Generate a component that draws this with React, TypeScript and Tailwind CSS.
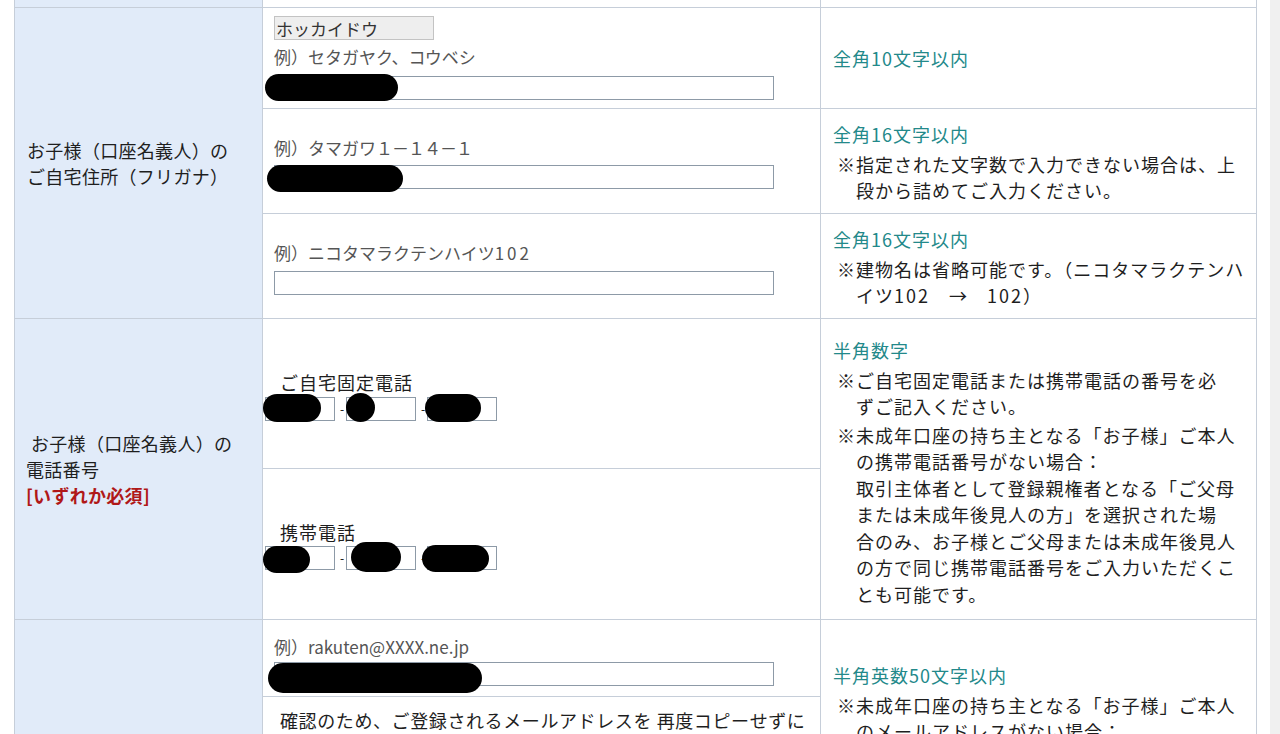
import React from "react";

const Blob = ({ l, t, w, h }: { l: number; t: number; w: number; h: number }) => (
  <div
    className="absolute rounded-full bg-black"
    style={{ left: l, top: t, width: w, height: h }}
  />
);

const Input = () => (
  <div className="h-[24px] w-[500px] border border-[#8d9aa7] bg-white" />
);

const PhoneBoxes = () => (
  <div className="flex items-center">
    <div className="h-[24px] w-[70px] border border-[#8d9aa7] bg-white" />
    <span className="w-[11px] pl-[5px] text-[12px] leading-none text-black">-</span>
    <div className="h-[24px] w-[70px] border border-[#8d9aa7] bg-white" />
    <span className="w-[11px] pl-[5px] text-[12px] leading-none text-black">-</span>
    <div className="h-[24px] w-[70px] border border-[#8d9aa7] bg-white" />
  </div>
);

const Teal = ({ children }: { children: React.ReactNode }) => (
  <div className="mb-[3px] text-[#23898a]">{children}</div>
);

const Cont = ({ children }: { children: React.ReactNode }) => (
  <div className="whitespace-nowrap pl-[19px]">{children}</div>
);

export default function App() {
  const blue = "bg-[#e1ebf9]";
  const right =
    "col-start-3 flex flex-col bg-white pl-[12px] text-[18px] leading-[26.5px] tracking-[1px] text-[#1e1e1e]";
  const ex = "text-[17px] leading-[24px] text-[#555555] whitespace-nowrap";
  return (
    <div className="flex h-[734px] w-[1280px] overflow-hidden bg-white font-['Noto_Sans_CJK_JP',sans-serif]">
      <div className="w-[14px] shrink-0" />
      <div className="grid w-[1243px] shrink-0 grid-cols-[247px_557px_435px] grid-rows-[7px_100px_104px_104px_149px_150px_76px_150px] gap-px self-start bg-[#c6ced9] px-px pb-px">
        {/* top partial row */}
        <div className={`col-start-1 row-start-1 ${blue}`} />
        <div className="col-start-2 row-start-1 bg-white" />
        <div className="col-start-3 row-start-1 bg-white" />

        {/* address label */}
        <div
          className={`col-start-1 row-start-2 row-span-3 flex flex-col justify-center pl-[12px] text-[18px] leading-[26px] tracking-[0.3px] text-[#1e1e1e] ${blue}`}
        >
          <div>お子様（口座名義人）の</div>
          <div>ご自宅住所（フリガナ）</div>
        </div>

        {/* address row 1 */}
        <div className="relative col-start-2 row-start-2 flex flex-col bg-white pl-[11px] pt-[8px]">
          <div className="flex h-[24px] w-[160px] items-center border border-[#c3c3c3] bg-[#eeeeee] pl-[1px] text-[17px] leading-none text-[#333]">
            ホッカイドウ
          </div>
          <div className={`mt-[5px] ${ex}`}>例）セタガヤク、コウベシ</div>
          <div className="mt-[7px]">
            <Input />
          </div>
          <Blob l={2} t={66} w={133} h={27} />
        </div>
        <div className={`row-start-2 justify-center ${right}`}>
          <div className="text-[#23898a]">全角10文字以内</div>
        </div>

        {/* address row 2 */}
        <div className="relative col-start-2 row-start-3 flex flex-col bg-white pl-[11px] pt-[27px]">
          <div className={ex}>
            例）タマガワ<span className="tracking-[-1px]">１－１４－１</span>
          </div>
          <div className="mt-[5px]">
            <Input />
          </div>
          <Blob l={4} t={56} w={136} h={27} />
        </div>
        <div className={`row-start-3 pt-[12px] ${right}`}>
          <Teal>全角16文字以内</Teal>
          <div className="pl-[4px]">
            <div className="whitespace-nowrap">※指定された文字数で入力できない場合は、上</div>
            <Cont>段から詰めてご入力ください。</Cont>
          </div>
        </div>

        {/* address row 3 */}
        <div className="col-start-2 row-start-4 flex flex-col bg-white pl-[11px] pt-[27px]">
          <div className={ex}>
            例）ニコタマラクテンハイツ<span className="tracking-[3px]">102</span>
          </div>
          <div className="mt-[6px]">
            <Input />
          </div>
        </div>
        <div className={`row-start-4 pt-[12px] ${right}`}>
          <Teal>全角16文字以内</Teal>
          <div className="pl-[4px]">
            <div className="whitespace-nowrap">※建物名は省略可能です。（ニコタマラクテンハ</div>
            <Cont>
              イツ<span className="tracking-[2px]">102</span>　→　<span className="tracking-[2px]">102</span>）
            </Cont>
          </div>
        </div>

        {/* phone label */}
        <div
          className={`col-start-1 row-start-5 row-span-2 flex flex-col justify-center pl-[11px] text-[18px] leading-[26px] tracking-[0.3px] text-[#1e1e1e] ${blue}`}
        >
          <div className="pl-[5px]">お子様（口座名義人）の</div>
          <div>電話番号</div>
          <div className="font-bold text-[#b01818]">[いずれか必須]</div>
        </div>

        {/* home phone */}
        <div className="relative col-start-2 row-start-5 flex flex-col bg-white pl-[2px] pt-[52px]">
          <div className="pl-[15px] text-[18px] leading-[22px] tracking-[1px] text-[#1e1e1e]">
            ご自宅固定電話
          </div>
          <div className="mt-[4px]">
            <PhoneBoxes />
          </div>
          <Blob l={0} t={75} w={58} h={28} />
          <Blob l={83} t={74} w={29} h={29} />
          <Blob l={162} t={75} w={56} h={28} />
        </div>

        {/* mobile phone */}
        <div className="relative col-start-2 row-start-6 flex flex-col bg-white pl-[2px] pt-[52px]">
          <div className="pl-[15px] text-[18px] leading-[22px] tracking-[1px] text-[#1e1e1e]">
            携帯電話
          </div>
          <div className="mt-[3px]">
            <PhoneBoxes />
          </div>
          <Blob l={0} t={77} w={47} h={27} />
          <Blob l={88} t={73} w={50} h={30} />
          <Blob l={159} t={76} w={67} h={27} />
        </div>

        <div className={`row-start-5 row-span-2 pt-[18px] ${right}`}>
          <Teal>半角数字</Teal>
          <div className="pl-[4px]">
            <div className="whitespace-nowrap">※ご自宅固定電話または携帯電話の番号を必</div>
            <Cont>ずご記入ください。</Cont>
            <div className="mt-[2px] whitespace-nowrap">※未成年口座の持ち主となる「お子様」ご本人</div>
            <Cont>の携帯電話番号がない場合：</Cont>
            <Cont>取引主体者として登録親権者となる「ご父母</Cont>
            <Cont>または未成年後見人の方」を選択された場</Cont>
            <Cont>合のみ、お子様とご父母または未成年後見人</Cont>
            <Cont>の方で同じ携帯電話番号をご入力いただくこ</Cont>
            <Cont>とも可能です。</Cont>
          </div>
        </div>

        {/* email */}
        <div className={`col-start-1 row-start-7 row-span-2 ${blue}`} />
        <div className="relative col-start-2 row-start-7 flex flex-col bg-white pl-[11px] pt-[15px]">
          <div className={ex}>例）rakuten@XXXX.ne.jp</div>
          <div className="mt-[3px]">
            <Input />
          </div>
          <Blob l={5} t={43} w={214} h={30} />
        </div>
        <div className="col-start-2 row-start-8 bg-white pl-[17px] pt-[10px] text-[18px] leading-[26px] tracking-[0.6px] text-[#1e1e1e] whitespace-nowrap">
          確認のため、ご登録されるメールアドレスを 再度コピーせずに
        </div>
        <div className={`row-start-7 row-span-2 pt-[42px] ${right}`}>
          <Teal>半角英数50文字以内</Teal>
          <div className="pl-[4px]">
            <div className="whitespace-nowrap">※未成年口座の持ち主となる「お子様」ご本人</div>
            <Cont>のメールアドレスがない場合：</Cont>
          </div>
        </div>
      </div>
      <div className="w-[13px] shrink-0" />
      <div className="w-[10px] shrink-0 bg-[#f0f0f0]" />
    </div>
  );
}
